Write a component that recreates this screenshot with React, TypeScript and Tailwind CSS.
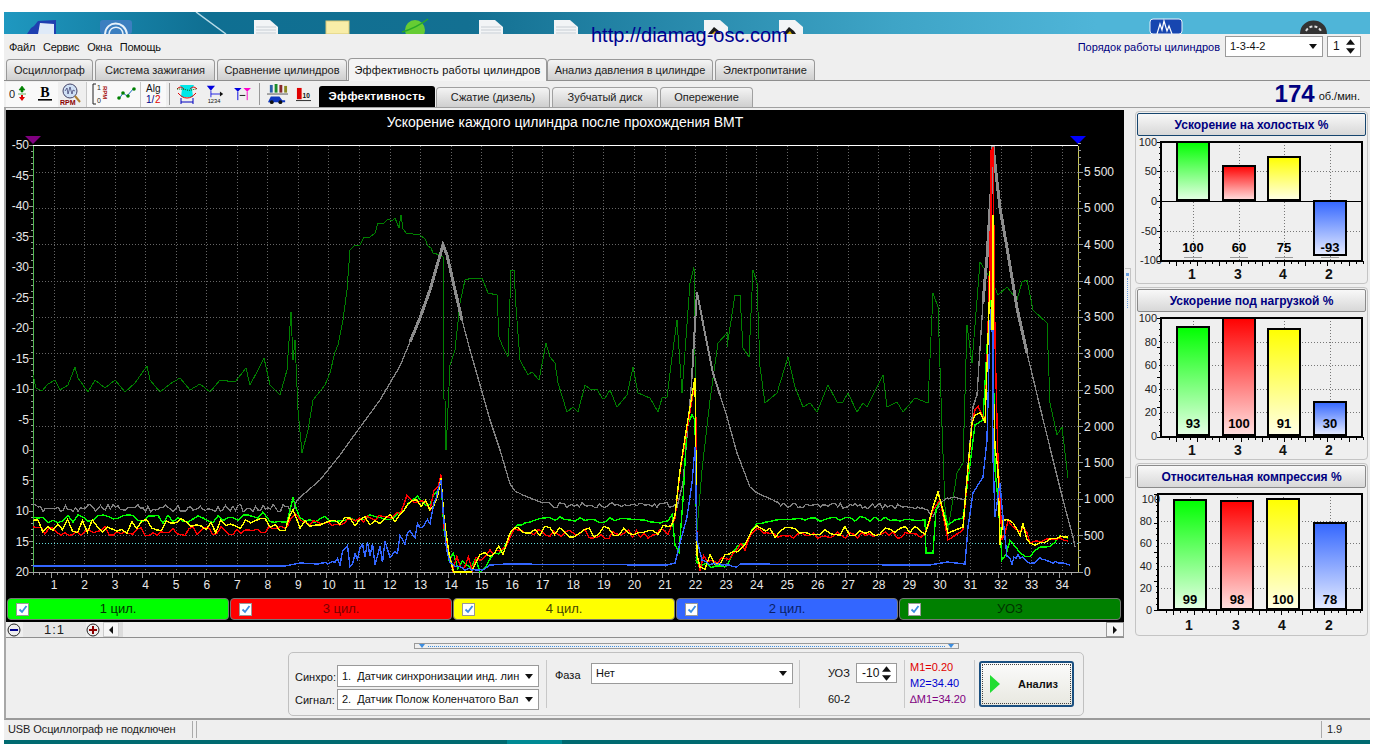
import type { ReactNode } from 'react'

const tabs = [
  { label: 'Осциллограф', w: 'w-[87px]' },
  { label: 'Система зажигания', w: 'w-[120px]' },
  { label: 'Сравнение цилиндров', w: 'w-[130px]' },
  { label: 'Эффективность работы цилиндров', w: 'w-[199px]', active: true },
  { label: 'Анализ давления в цилиндре', w: 'w-[166px]' },
  { label: 'Электропитание', w: 'w-[100px]' },
]

const cylinders = [
  { label: '1 цил.', bg: 'bg-[#00ff00]', text: 'text-[#003300]' },
  { label: '3 цил.', bg: 'bg-[#ff0000]', text: 'text-[#7a0000]' },
  { label: '4 цил.', bg: 'bg-[#ffff00]', text: 'text-[#444400]' },
  { label: '2 цил.', bg: 'bg-[#3366ff]', text: 'text-[#0a1f66]' },
  { label: 'УОЗ', bg: 'bg-[#008000]', text: 'text-[#003300]' },
]

// page coordinates: [x, y, noise]
const darkGreen = [
  [33, 375], [36, 388], [42, 391], [48, 384], [55, 380], [60, 390], [68, 385], [75, 367], [78, 378], [88, 392], [95, 380], [105, 388], [115, 380], [125, 392], [135, 383], [147, 366], [150, 380], [160, 392], [170, 384], [180, 378], [190, 390], [200, 384], [210, 392], [220, 380], [235, 382], [246, 368], [250, 385], [258, 370], [264, 358], [270, 385], [280, 395], [287, 370], [291, 312], [293, 360], [295, 340], [298, 410], [302, 453], [308, 430], [313, 400], [325, 385], [330, 373], [335, 352], [338, 345], [343, 320], [347, 290], [350, 250], [355, 245], [360, 245], [364, 237], [370, 237], [375, 233], [378, 223], [384, 223], [388, 219], [392, 221], [395, 218], [399, 228], [401, 215], [403, 229], [406, 233], [413, 234], [420, 235], [425, 239], [428, 246], [431, 248], [433, 253], [440, 255], [443, 257], [443, 398], [445, 400], [446, 450], [447, 430], [450, 365], [455, 350], [460, 303], [465, 280], [472, 278], [482, 278], [488, 293], [497, 295], [499, 337], [502, 345], [508, 357], [511, 270], [514, 270], [516, 307], [520, 360], [528, 375], [532, 372], [539, 380], [546, 343], [550, 357], [555, 363], [558, 383], [567, 412], [573, 407], [578, 412], [585, 385], [590, 389], [597, 389], [602, 398], [605, 398], [610, 390], [617, 407], [627, 395], [633, 367], [638, 393], [650, 398], [658, 412], [662, 398], [667, 397], [672, 357], [677, 320], [682, 393], [690, 283], [694, 267], [697, 530], [702, 470], [710, 400], [718, 343], [727, 333], [727, 347], [735, 295], [740, 295], [743, 348], [749, 357], [753, 270], [757, 283], [760, 367], [765, 403], [777, 393], [788, 357], [795, 387], [803, 407], [810, 403], [817, 412], [828, 385], [837, 402], [843, 402], [848, 393], [857, 412], [863, 403], [867, 407], [883, 375], [887, 407], [897, 402], [903, 412], [915, 398], [928, 403], [933, 293], [938, 307], [942, 427], [945, 507], [948, 530], [957, 473], [963, 463], [967, 325], [972, 363], [980, 262], [987, 273], [993, 283], [998, 295], [1007, 287], [1017, 300], [1022, 282], [1027, 280], [1033, 310], [1047, 323], [1050, 403], [1057, 435], [1062, 427], [1068, 478],
]

const grayPts = [
  [33, 508, 3], [293, 508, 3], [297, 500], [320, 480], [340, 455], [350, 441], [380, 400], [400, 366], [420, 318], [430, 290], [443, 245], [447, 255], [455, 290], [462, 320], [470, 350], [480, 385], [490, 420], [500, 450], [510, 484], [515, 491], [525, 496], [540, 502], [552, 505, 2], [672, 505, 2], [677, 507], [683, 483], [692, 377], [694, 340], [697, 292], [703, 323], [713, 373], [727, 417], [737, 453], [750, 487], [757, 493], [773, 500], [783, 505, 2], [925, 507, 2], [933, 517], [940, 503], [950, 497, 1], [965, 500], [973, 407], [977, 395], [983, 302], [987, 257], [992, 178], [993, 146], [1000, 208], [1007, 248], [1017, 308], [1027, 353], [1040, 407], [1053, 460], [1063, 500], [1073, 537], [1075, 547],
]

const grayThick = [
  [410, 342], [420, 318], [430, 290], [443, 245], [447, 255], [455, 290], [462, 320],
]
const grayThick2 = [
  [692, 377], [694, 340], [697, 292], [703, 323], [713, 373], [720, 395],
]
const grayThick3 = [
  [983, 302], [987, 257], [992, 178], [993, 146], [1000, 208], [1007, 248], [1017, 308], [1027, 353],
]

const greenPts = [
  [33, 519, 3], [258, 519, 3], [263, 512], [270, 522, 1], [287, 522, 1], [293, 498], [300, 520, 2], [395, 517, 2], [400, 512, 2], [413, 500, 3], [430, 503, 4], [438, 490, 5], [441, 477, 2], [444, 530, 4], [449, 560, 6], [480, 566, 5], [490, 558, 3], [503, 552, 2], [510, 535, 1], [514, 527, 1], [525, 523, 1], [545, 518, 1], [570, 520, 2], [590, 520, 2], [600, 522, 2], [620, 518, 1], [640, 519, 1], [660, 522, 1], [668, 521], [672, 515], [675, 545], [679, 552], [683, 500], [687, 425], [692, 415], [695, 420], [697, 560, 6], [725, 562, 5], [733, 550, 3], [745, 545, 2], [752, 530, 1], [757, 523, 1], [770, 522, 1], [790, 518, 1], [810, 520, 2], [840, 518, 2], [880, 520, 2], [910, 520, 1], [925, 520], [926, 553], [933, 553], [936, 510], [940, 500], [948, 525], [955, 520], [963, 518], [968, 480], [975, 425], [983, 420], [988, 330], [990, 285], [993, 340], [995, 470], [998, 500], [1002, 560], [1010, 545, 4], [1020, 555, 3], [1030, 555, 1], [1040, 548, 1], [1050, 545, 1], [1060, 537, 1], [1068, 538],
]

const redPts = [
  [33, 531, 3], [285, 531, 3], [290, 520], [296, 514], [303, 522, 1], [320, 524, 2], [395, 516, 2], [400, 514, 2], [407, 497, 2], [430, 503, 5], [438, 488, 6], [441, 476, 2], [444, 525, 4], [449, 565, 7], [480, 564, 6], [490, 555, 4], [503, 550, 3], [510, 537, 1], [514, 530, 1], [530, 534, 3], [668, 534, 3], [675, 518], [680, 472], [687, 430], [692, 400], [695, 380], [696, 425], [697, 555], [700, 565, 6], [725, 560, 5], [733, 550, 3], [745, 547, 3], [752, 533, 1], [757, 530, 1], [770, 535, 2], [925, 535, 2], [933, 510], [940, 500], [948, 540], [963, 530], [968, 470], [972, 425], [975, 408, 5], [985, 415, 5], [988, 330], [992, 150], [993, 147], [995, 340], [998, 460], [1002, 540], [1008, 520, 4], [1020, 530, 5], [1030, 540, 2], [1040, 541, 1], [1050, 539, 1], [1060, 539, 1], [1068, 541],
]

const yellowPts = [
  [33, 526, 4], [285, 526, 4], [290, 515], [293, 510], [300, 525, 2], [395, 518, 3], [400, 516, 2], [412, 505, 3], [430, 508, 4], [438, 495, 5], [441, 475, 2], [444, 520, 3], [449, 565, 7], [480, 565, 6], [490, 555, 4], [503, 550, 3], [510, 535, 1], [514, 528, 1], [530, 532, 3], [668, 531, 3], [675, 515], [680, 470], [687, 425], [692, 395], [695, 378], [697, 555], [700, 560, 6], [725, 560, 5], [733, 550, 3], [745, 545, 3], [752, 530, 1], [757, 525, 1], [770, 532, 3], [925, 531, 3], [933, 507], [938, 492], [942, 507], [948, 533], [963, 527], [968, 467], [972, 423], [975, 410, 4], [985, 420, 4], [988, 340], [992, 215], [993, 373], [995, 447], [998, 470], [1000, 545], [1003, 523, 3], [1010, 517, 4], [1017, 533, 4], [1023, 530, 4], [1030, 543, 2], [1040, 542, 1], [1050, 540, 1], [1057, 537, 1], [1068, 537],
]

const bluePts = [
  [33, 566], [285, 566], [300, 563], [318, 564], [330, 563, 2], [340, 556, 8], [395, 553, 12], [405, 540, 6], [420, 527, 5], [430, 520, 4], [436, 500, 3], [438, 490], [441, 480], [443, 510], [446, 545], [450, 565, 2], [460, 569, 2], [483, 570], [490, 565], [507, 564], [667, 565], [675, 563], [680, 543], [687, 517], [692, 483], [695, 447], [697, 540], [702, 560, 3], [737, 567], [740, 564], [930, 565], [947, 562], [965, 564], [968, 527], [973, 493], [983, 477], [987, 440], [990, 323], [992, 300], [993, 457], [995, 517], [1000, 483], [1002, 507], [1007, 557, 3], [1012, 560, 3], [1020, 557, 2], [1030, 565, 1], [1040, 559, 1], [1053, 562, 1], [1063, 563], [1070, 565],
]

function plain(pts: number[][]) {
  return pts.map((p) => `${p[0]},${p[1]}`).join(' ')
}

function noisy(pts: number[][], seed: number, step = 3, gain = 1) {
  const rnd = (i: number) => {
    const s = Math.sin(i * 12.9898 + seed * 78.233) * 43758.5453
    return s - Math.floor(s) - 0.5
  }
  const out: string[] = []
  let k = 0
  for (let i = 0; i < pts.length - 1; i++) {
    const [x1, y1, a1 = 0] = pts[i]
    const [x2, y2, a2 = 0] = pts[i + 1]
    const n = Math.max(1, Math.ceil((x2 - x1) / step))
    for (let j = 0; j < n; j++) {
      const t = j / n
      const y = y1 + (y2 - y1) * t + rnd(k++) * 2 * gain * (a1 + (a2 - a1) * t)
      out.push(`${(x1 + (x2 - x1) * t).toFixed(1)},${Math.min(572, y).toFixed(1)}`)
    }
  }
  const last = pts[pts.length - 1]
  out.push(`${last[0]},${last[1]}`)
  return out.join(' ')
}

const xAt = (t: number) => 54 + 30.55 * (t - 1)
const hours = Array.from({ length: 34 }, (_, i) => i + 1)
const leftLabels = [-50, -45, -40, -35, -30, -25, -20, -15, -10, -5, 0, 5, 10, 15, 20]
const rightLabels = ['500', '1 000', '1 500', '2 000', '2 500', '3 000', '3 500', '4 000', '4 500', '5 000', '5 500']

function MainChart() {
  return (
    <svg viewBox="6 110 1118 488" className="block w-[1118px] h-[488px]">
      <text x="565" y="127" fill="#fff" fontSize="14" textAnchor="middle">Ускорение каждого цилиндра после прохождения ВМТ</text>
      <polygon points="25,136 41,136 33,144" fill="#800080" />
      <polygon points="1070,136 1086,136 1078,144" fill="#0000ff" />
      <g shapeRendering="crispEdges">
        {hours.map((h) => (
          <line key={h} x1={xAt(h)} x2={xAt(h)} y1="146" y2="572" stroke="#666" strokeDasharray="1 2" />
        ))}
        {rightLabels.map((l, i) => (
          <line key={l} x1="33" x2="1078" y1={572 - 36.36 * (i + 1)} y2={572 - 36.36 * (i + 1)} stroke="#666" strokeDasharray="1 2" />
        ))}
        <line x1="33" x2="1078" y1="543" y2="543" stroke="#66dddd" strokeDasharray="1 2" />
        <line x1="33" x2="1078" y1="145.5" y2="145.5" stroke="#fff" strokeWidth="1.5" />
        <line x1="33" x2="1078" y1="572.5" y2="572.5" stroke="#a8a8a8" strokeWidth="1.5" />
        <line x1="33.5" x2="33.5" y1="146" y2="572" stroke="#55bb55" strokeWidth="1.5" />
        <line x1="1078.5" x2="1078.5" y1="146" y2="572" stroke="#c8c85a" strokeWidth="1.5" />
        {Array.from({ length: 71 }, (_, i) => (
          <line key={i} x1={i % 5 === 0 ? 29 : 31} x2="33" y1={145 + i * 6.1} y2={145 + i * 6.1} stroke="#999" />
        ))}
        {Array.from({ length: 171 }, (_, i) => (
          <line key={i} x1={33 + i * 6.11} x2={33 + i * 6.11} y1="573" y2={(i + 1) % 5 === 4 ? 578 : 575} stroke="#999" />
        ))}
        {Array.from({ length: 60 }, (_, i) => (
          <line key={i} x1="1078" x2={i % 5 === 0 ? 1083 : 1081} y1={572 - i * 7.27} y2={572 - i * 7.27} stroke="#999" />
        ))}
        <polyline points={plain(darkGreen)} fill="none" stroke="#008000" />
        <polyline points={noisy(grayPts, 2, 2.5, 1.3)} fill="none" stroke="#808080" strokeWidth="1.3" />
        <polyline points={plain(grayThick)} fill="none" stroke="#8c8c8c" strokeWidth="3" />
        <polyline points={plain(grayThick2)} fill="none" stroke="#8c8c8c" strokeWidth="2" />
        <polyline points={plain(grayThick3)} fill="none" stroke="#8c8c8c" strokeWidth="3" />
        <polyline points={noisy(greenPts, 3, 5, 1.5)} fill="none" stroke="#00ff00" strokeWidth="1.4" />
        <polyline points={noisy(redPts, 5, 4, 1.6)} fill="none" stroke="#ff0000" strokeWidth="1.4" />
        <polyline points={noisy(yellowPts, 7, 5, 1.9)} fill="none" stroke="#ffff00" strokeWidth="1.4" />
        <polyline points={noisy(bluePts, 9, 2.5, 1.3)} fill="none" stroke="#3366ff" strokeWidth="1.4" />
        <line x1="992.5" x2="992.5" y1="215" y2="330" stroke="#ffff00" strokeWidth="3" />
        <line x1="990.5" x2="990.5" y1="150" y2="300" stroke="#ff0000" strokeWidth="2" />
        <line x1="993" x2="993" y1="330" y2="420" stroke="#3366ff" strokeWidth="2" />
      </g>
      <g fill="#e8e8e8" fontSize="12">
        {leftLabels.map((v, i) => (
          <text key={v} x="29" y={149 + i * 30.5} textAnchor="end">{v}</text>
        ))}
        {rightLabels.map((l, i) => (
          <text key={l} x="1084" y={576 - 36.36 * (i + 1)}>{l}</text>
        ))}
        <text x="1084" y="576">0</text>
        {hours.map((h) => (
          <text key={h} x={xAt(h)} y="589" textAnchor="middle">{h}</text>
        ))}
      </g>
    </svg>
  )
}

type Bar = { x: number; top: number; bottom: number; grad: string; value: string; label: string }

const grads = [
  { id: 'g1', from: '#00ff00', to: '#e6ffe6' },
  { id: 'g3', from: '#ff0000', to: '#ffe0e0' },
  { id: 'g4', from: '#ffff00', to: '#ffffe6' },
  { id: 'g2', from: '#3366ff', to: '#e6ecff' },
]

function Gradients() {
  return (
    <svg className="w-0 h-0 block">
      <defs>
        {grads.map((g) => (
          <linearGradient key={g.id} id={g.id} x1="0" y1="0" x2="0" y2="1">
            <stop offset="0" stopColor={g.from} />
            <stop offset="1" stopColor={g.to} />
          </linearGradient>
        ))}
      </defs>
    </svg>
  )
}

function BarChart(props: {
  y: number
  left: number
  top: number
  bottom: number
  labelEnd: number
  ticks: { label: string; y: number; x?: number }[]
  grid: number[]
  gridX: number[]
  bars: Bar[]
  zero?: number
  valueY: number
  labelY: number
  underlined?: boolean
}) {
  const { y, left, top, bottom, labelEnd, ticks, grid, gridX, bars, zero, valueY, labelY, underlined } = props
  const right = 1362
  return (
    <svg viewBox={`1136 ${y} 231 147`} className="block w-[231px] h-[147px]">
      <g fontSize="11" fill="#222">
        {ticks.map((t) => (
          <text key={t.label} x={t.x ?? labelEnd} y={t.y + 4} textAnchor="end">{t.label}</text>
        ))}
      </g>
      <g shapeRendering="crispEdges">
        {grid.map((g) => (
          <line key={g} x1={left} x2={right} y1={g} y2={g} stroke="#777" strokeDasharray="1 2" />
        ))}
        {gridX.map((g) => (
          <line key={g} x1={g} x2={g} y1={top} y2={bottom} stroke="#777" strokeDasharray="1 2" />
        ))}
        {bars.map((b) => (
          <rect key={b.x} x={b.x} y={b.top} width="32" height={b.bottom - b.top} fill={`url(#${b.grad})`} stroke="#000" strokeWidth="1.2" />
        ))}
        {zero !== undefined && <line x1={left} x2={right} y1={zero} y2={zero} stroke="#000" />}
        <rect x={left} y={top} width={right - left} height={bottom - top} fill="none" stroke="#000" strokeWidth="2" />
        {Array.from({ length: 21 }, (_, i) => (
          <line key={i} x1={left - (i % 5 === 0 ? 4 : 2)} x2={left} y1={top + ((bottom - top) * i) / 20} y2={top + ((bottom - top) * i) / 20} stroke="#000" />
        ))}
        {Array.from({ length: 28 }, (_, i) => (
          <line key={i} x1={left + 8 + i * 7.2} x2={left + 8 + i * 7.2} y1={bottom} y2={bottom + (i % 3 === 1 ? 5 : 3)} stroke="#000" />
        ))}
        {underlined && bars.map((b) => (
          <rect key={b.x} x={b.x + 7} y={valueY + 5} width="18" height="1" fill="#999" />
        ))}
      </g>
      <g fontSize="13" fontWeight="700" fill="#000" textAnchor="middle">
        {bars.map((b) => (
          <text key={b.x} x={b.x + 16} y={valueY}>{b.value}</text>
        ))}
      </g>
      <g fontSize="14" fontWeight="700" fill="#111" textAnchor="middle">
        {bars.map((b) => (
          <text key={b.x} x={b.x + 15} y={labelY}>{b.label}</text>
        ))}
      </g>
    </svg>
  )
}

function Group({ title, focused, children }: { title: string; focused?: boolean; children: ReactNode }) {
  return (
    <div className="h-[173px] w-[233px] rounded-[4px] border border-[#c4c4c4] overflow-hidden">
      <div className={`mx-px mt-px h-[23px] w-[229px] rounded-[2px] border bg-gradient-to-b from-[#f8f8f8] to-[#d8d8d8] flex items-center justify-center text-[12px] font-bold text-[#000080] ${focused ? 'border-[#16456e]' : 'border-[#8a8a8a]'}`}>
        {title}
      </div>
      {children}
    </div>
  )
}

function Caret() {
  return (
    <svg viewBox="0 0 8 5" className="w-[8px] h-[5px] shrink-0">
      <polygon points="0,0 8,0 4,5" fill="#111" />
    </svg>
  )
}

function Select({ value, w, h }: { value: string; w: string; h: string }) {
  return (
    <div className={`${w} ${h} text-[11px] bg-white border border-[#9a9a9a] flex items-center pl-[4px] pr-[5px] text-[#111]`}>
      <span className="flex-1 whitespace-pre">{value}</span>
      <Caret />
    </div>
  )
}

function Spin({ value, w, h }: { value: string; w: string; h: string }) {
  return (
    <div className={`${w} ${h} bg-white border border-[#9a9a9a] flex items-center justify-between pl-[5px] pr-[5px] text-[12px] text-[#111]`}>
      <span>{value}</span>
      <svg viewBox="0 0 10 16" className="w-[9px] h-[15px]">
        <polygon points="0,6 10,6 5,0" fill="#111" />
        <polygon points="0,10 10,10 5,16" fill="#111" />
      </svg>
    </div>
  )
}

function Tool({ children, w, light }: { children: ReactNode; w: string; light?: boolean }) {
  return <div className={`${w} h-[25px] flex items-center justify-center ${light ? 'bg-[#f9f9f9]' : ''}`}>{children}</div>
}

function SubTab({ w, label }: { w: string; label: string }) {
  return (
    <div className={`${w} mr-[2px] h-[20px] self-end rounded-t-[4px] border border-b-0 border-[#a0a0a0] bg-gradient-to-b from-[#f4f4f4] to-[#cfcfcf] text-[11px] text-[#222] flex items-center justify-center`}>{label}</div>
  )
}

function Toolbar() {
  return (
    <div className="flex items-center pl-[2px] h-[26px] shrink-0">
      <Tool w="w-[25px]" light>
        <svg viewBox="0 0 20 18" className="w-[20px] h-[18px]">
          <text x="0" y="13" fontSize="11" fill="#222">0</text>
          <path d="M13 1l3 4h-2v2h-2V5h-2zM9 9h8" fill="#008000" stroke="#008000" strokeWidth=".6" />
          <path d="M13 16l3-4h-2v-2h-2v2h-2z" fill="#e00000" />
        </svg>
      </Tool>
      <Tool w="w-[27px]" light>
        <svg viewBox="0 0 18 18" className="w-[18px] h-[18px]">
          <text x="9" y="12" fontSize="14" fontWeight="700" textAnchor="middle" fill="#000" fontFamily="Liberation Serif">B</text>
          <rect x="2" y="14" width="14" height="1.6" fill="#000" />
        </svg>
      </Tool>
      <Tool w="w-[28px]">
        <svg viewBox="0 0 24 24" className="w-[24px] h-[24px]">
          <circle cx="10" cy="9" r="7" fill="#cfe0f5" stroke="#446" />
          <path d="M5 9l2-3 1 6 2-7 2 7 1-4 2 1" fill="none" stroke="#336" strokeWidth=".7" />
          <path d="M15 14l5 6" stroke="#b08030" strokeWidth="2" />
          <text x="0" y="23" fontSize="7" fontWeight="700" fill="#8b0000">RPM</text>
        </svg>
      </Tool>
      <div className="w-px h-[25px] bg-[#c8c8c8]" />
      <Tool w="w-[27px]" light>
        <svg viewBox="0 0 18 24" className="w-[18px] h-[24px]">
          <path d="M4 2H1v20h3" fill="none" stroke="#222" />
          <text x="5" y="8" fontSize="7" fill="#222">1</text>
          <text x="5" y="21" fontSize="7" fill="#222">0</text>
          <text x="0" y="0" fontSize="6" fontWeight="700" fill="#a00000" transform="translate(11 4) rotate(90)">RPM</text>
        </svg>
      </Tool>
      <Tool w="w-[26px]" light>
        <svg viewBox="0 0 20 14" className="w-[20px] h-[14px]">
          <path d="M2 12l4-6 4 3 7-8" fill="none" stroke="#1a6abf" />
          <circle cx="2" cy="11" r="1.8" fill="#008000" /><circle cx="6" cy="6" r="1.8" fill="#008000" />
          <circle cx="11" cy="9" r="1.8" fill="#008000" /><circle cx="17" cy="2" r="1.8" fill="#008000" />
        </svg>
      </Tool>
      <div className="w-px h-[25px] bg-[#c8c8c8]" />
      <Tool w="w-[25px]" light>
        <svg viewBox="0 0 18 24" className="w-[18px] h-[24px]">
          <text x="1" y="10" fontSize="10" fill="#111">Alg</text>
          <text x="1" y="21" fontSize="10" fill="#00008b">1/</text>
          <text x="10" y="21" fontSize="10" fill="#e00000">2</text>
        </svg>
      </Tool>
      <div className="w-[3px]" />
      <div className="w-px h-[22px] bg-[#999]" />
      <Tool w="w-[34px]">
        <svg viewBox="0 0 22 22" className="w-[22px] h-[22px]">
          <path d="M4 2h14l-2 4 1 8H5l1-8z" fill="#00e8e8" />
          <path d="M1 6c3-3 5-2 7 0M21 6c-3-3-5-2-7 0M2 10c3 3 5 5 9 5s6-2 9-5" fill="none" stroke="#e00000" />
          <path d="M1 6c4 0 6 0 10 1s6-1 10-1" fill="none" stroke="#006400" strokeDasharray="1 1" />
          <path d="M5 15v6M17 15v6M5 19h12" stroke="#0000c0" fill="none" />
        </svg>
      </Tool>
      <Tool w="w-[21px]">
        <svg viewBox="0 0 22 22" className="w-[18px] h-[18px]">
          <polygon points="1,1 11,1 6,7" fill="#0000e0" />
          <path d="M6 7v8M6 11h12" stroke="#0000e0" fill="none" />
          <polygon points="17,8 21,11 17,14" fill="#111" />
          <text x="2" y="22" fontSize="7" fill="#111">1234</text>
        </svg>
      </Tool>
      <Tool w="w-[34px]">
        <svg viewBox="0 0 18 16" className="w-[17px] h-[15px]">
          <polygon points="0,1 8,1 4,5" fill="#0000e0" />
          <path d="M4 5v9" stroke="#0000e0" />
          <polygon points="10,1 18,1 14,5" fill="#ff00cc" />
          <path d="M14 5v9" stroke="#ff00cc" />
          <path d="M6 9h6" stroke="#111" />
        </svg>
      </Tool>
      <div className="w-px h-[22px] bg-[#999]" />
      <Tool w="w-[34px]">
        <svg viewBox="0 0 22 22" className="w-[21px] h-[21px]">
          <rect x="3" y="1" width="3" height="8" fill="#2a5ea8" /><rect x="8" y="0" width="3" height="9" fill="#1a8a2a" />
          <rect x="13" y="1" width="3" height="8" fill="#8a2a2a" /><rect x="18" y="2" width="3" height="7" fill="#8a8a20" />
          <rect x="0" y="10" width="22" height="1" fill="#555" />
          <path d="M2 17l2-4h9l3 4h3v2H1z" fill="#1038c0" />
          <circle cx="5" cy="19" r="2" fill="#111" /><circle cx="14" cy="19" r="2" fill="#111" />
        </svg>
      </Tool>
      <Tool w="w-[18px]">
        <svg viewBox="0 0 16 16" className="w-[15px] h-[15px]">
          <rect x="1" y="1" width="5" height="12" fill="#e00000" />
          <text x="7" y="12" fontSize="7" fontWeight="700" fill="#111">10</text>
          <rect x="0" y="14" width="16" height="1" fill="#222" />
        </svg>
      </Tool>
      <div className="w-[7px]" />
      <div className="w-[116px] h-[21px] self-end bg-black rounded-t-[3px] text-white font-bold text-[11.5px] tracking-[.3px] flex items-center justify-center">Эффективность</div>
      <div className="w-px" />
      <SubTab w="w-[114px]" label="Сжатие (дизель)" />
      <SubTab w="w-[106px]" label="Зубчатый диск" />
      <SubTab w="w-[93px]" label="Опережение" />
      <div className="flex-1 flex items-center justify-end pr-[10px] h-[26px]">
        <span className="text-[24px] leading-none font-bold text-[#000080]">174</span>
        <span className="ml-[4px] mt-[5px] text-[11px] text-[#111]">об./мин.</span>
      </div>
    </div>
  )
}

function Desktop() {
  return (
    <svg viewBox="4 12 1366 22" className="block w-[1366px] h-[22px] shrink-0">
      <defs>
        <linearGradient id="wall" x1="0" y1="0" x2="1" y2="0">
          <stop offset="0" stopColor="#1f98c0" />
          <stop offset=".15" stopColor="#0f6f92" />
          <stop offset=".34" stopColor="#137092" />
          <stop offset=".65" stopColor="#3ea4c6" />
          <stop offset=".8" stopColor="#4fb5d8" />
          <stop offset="1" stopColor="#4fb5d8" />
        </linearGradient>
      </defs>
      <rect x="4" y="12" width="1366" height="22" fill="url(#wall)" />
      <path d="M196 12l30 22" stroke="#b8dce8" strokeWidth="1.5" />
      <path d="M27 34l4-6 3-2 4-5 18-1v14z" fill="#1f3fb0" />
      <path d="M40 23l14 1v10H38z" fill="#dfeaf8" />
      <rect x="100" y="20" width="32" height="14" rx="3" fill="#3c7fc0" />
      <path d="M105 34c1-14 20-14 22 0" fill="none" stroke="#e8f2fa" strokeWidth="2" />
      <path d="M109 34c1-9 13-9 14 0" fill="none" stroke="#e8f2fa" strokeWidth="1.5" />
      {[254, 479, 554].map((x) => (
        <g key={x}>
          <path d={`M${x} 20h16l8 7v7h-24z`} fill="#f2f4f6" />
          <path d={`M${x + 2} 27h20M${x + 2} 30h20M${x + 2} 33h20`} stroke="#c8ced4" />
        </g>
      ))}
      {[704, 779].map((x) => (
        <g key={x}>
          <path d={`M${x} 20h16l8 7v7h-24z`} fill="#f2f4f6" />
          <path d={`M${x + 4} 34l6-7 5 4 2 3z`} fill="#1a1a1a" />
          <path d={`M${x + 8} 34l3-3 2 3z`} fill="#d8b400" />
        </g>
      ))}
      <rect x="326" y="21" width="23" height="13" fill="#f8eda8" stroke="#d8c878" />
      <circle cx="415" cy="30" r="10" fill="#66cc33" />
      <path d="M402 32c8-2 20-8 26-13" fill="none" stroke="#28a828" strokeWidth="1.5" />
      <rect x="1150" y="19" width="32" height="15" rx="3" fill="#1746b0" stroke="#e8f0fa" />
      <path d="M1157 34l3-10 2 6 2-9 3 10 2-5 3 8" fill="none" stroke="#fff" strokeWidth="1.2" />
      <path d="M1300 34c0-18 27-18 27 0z" fill="#333" />
      <path d="M1306 31c3-6 12-6 15 0" fill="none" stroke="#ddd" strokeWidth="2" strokeDasharray="3 2" />
    </svg>
  )
}

export default function App() {
  return (
    <div className="w-[1382px] h-[744px] bg-white pt-[12px] pl-[4px] pr-[12px] overflow-hidden font-['Liberation_Sans',sans-serif] flex flex-col">
      <Gradients />
      <Desktop />
      <div className="relative w-[1366px] h-[706px] shrink-0 bg-[#efefef] flex flex-col">
        <div className="absolute left-[587px] -top-[11px] text-[20px] leading-[24px] text-[#000090] whitespace-nowrap">http://diamag-osc.com</div>

        <div className="h-[24px] shrink-0 flex items-center pl-[5px] text-[11px] tracking-[-.25px] text-[#111] pt-[3px]">
          <span className="mr-[8px]">Файл</span>
          <span className="mr-[8px]">Сервис</span>
          <span className="mr-[8px]">Окна</span>
          <span>Помощь</span>
          <div className="ml-auto flex items-center pr-[9px] -mt-[3px] tracking-normal">
            <span className="text-[#000080] text-[11px] mr-[5px] mt-[2px]">Порядок работы цилиндров</span>
            <Select value="1-3-4-2" w="w-[98px]" h="h-[21px]" />
            <div className="w-[4px]" />
            <Spin value="1" w="w-[34px]" h="h-[21px]" />
          </div>
        </div>

        <div className="h-[23px] shrink-0 flex items-end pl-[2px] border-b border-[#8e8e8e] whitespace-nowrap">
          {tabs.map((t) =>
            t.active ? (
              <div key={t.label} className={`${t.w} h-[23px] -mb-px -ml-px z-10 rounded-t-[4px] border border-b-0 border-[#999] bg-[#f4f4f4] text-[11px] tracking-[.15px] text-[#111] flex items-center justify-center`}>{t.label}</div>
            ) : (
              <div key={t.label} className={`${t.w} h-[21px] rounded-t-[4px] border border-b-0 border-[#999] mr-[2px] bg-gradient-to-b from-[#f4f4f4] to-[#cfcfcf] text-[11px] text-[#222] flex items-center justify-center`}>{t.label}</div>
            ),
          )}
        </div>

        <div className="h-[27px] shrink-0 border-b border-[#a0a0a0]">
          <Toolbar />
        </div>

        <div className="h-[532px] shrink-0 flex">
          <div className="w-[1121px] shrink-0 border-l-2 border-[#a8a8a8] pt-[2px]">
            <div className="w-[1118px] h-[512px] bg-black">
              <MainChart />
              <div className="flex gap-px pl-[1px]">
                {cylinders.map((c) => (
                  <div key={c.label} className={`w-[222px] h-[22px] rounded-[4px] border border-[#777] ${c.bg} ${c.text} flex items-center text-[13px] pl-[8px]`}>
                    <span className="w-[13px] h-[13px] bg-white border border-[#999] flex items-center justify-center">
                      <svg viewBox="0 0 10 10" className="w-[10px] h-[10px]">
                        <path d="M1.5 5.5l2.5 2.5 4.5-6" fill="none" stroke="#3b8de0" strokeWidth="1.8" />
                      </svg>
                    </span>
                    <span className="flex-1 text-center pr-[21px]">{c.label}</span>
                  </div>
                ))}
              </div>
            </div>
            <div className="w-[1118px] h-[16px] flex items-center border-b border-[#8e8e8e] pl-[1px] text-[#222]">
              <svg viewBox="0 0 14 14" className="w-[14px] h-[14px]">
                <circle cx="7" cy="7" r="6" fill="#eee" stroke="#222" />
                <rect x="3" y="6" width="8" height="2" fill="#00008b" />
              </svg>
              <div className="ml-[2px] w-[63px] h-[15px] bg-[#e6e6e6] text-[13px] leading-[16px] text-center tracking-[1px]">1:1</div>
              <svg viewBox="0 0 14 14" className="w-[14px] h-[14px]">
                <circle cx="7" cy="7" r="6" fill="#eee" stroke="#222" />
                <path d="M3 7h8M7 3v8" stroke="#8b0000" strokeWidth="2" />
              </svg>
              <div className="ml-[3px] w-[16px] h-[15px] bg-[#f6f6f6] border border-[#ccc] flex items-center justify-center">
                <svg viewBox="0 0 4 8" className="w-[4px] h-[8px]"><polygon points="4,0 4,8 0,4" fill="#111" /></svg>
              </div>
              <div className="w-[4px] h-[15px] bg-[#dcdcdc]" />
              <div className="flex-1" />
              <div className="w-[18px] h-[15px] bg-[#f6f6f6] border border-[#999] flex items-center justify-center">
                <svg viewBox="0 0 4 8" className="w-[4px] h-[8px]"><polygon points="0,0 0,8 4,4" fill="#111" /></svg>
              </div>
            </div>
          </div>

          <div className="w-[7px] shrink-0 pt-[160px]">
            <div className="w-[6px] h-[210px] border border-l-0 border-[#c4c4c4] flex flex-col items-center pt-[4px] gap-[2px]">
              <span className="w-[3px] h-[3px] bg-[#6aa0e0]" />
              <span className="w-[2px] h-[30px] border-l border-dotted border-[#6aa0e0]" />
            </div>
          </div>

          <div className="pl-[3px] pt-[3px] flex flex-col gap-[3px]">
            <Group title="Ускорение на холостых %" focused>
              <BarChart
                y={136}
                left={1161}
                top={142}
                bottom={261}
                zero={201}
                labelEnd={1157}
                ticks={[{ label: '100', y: 142 }, { label: '50', y: 171 }, { label: '0', y: 201 }, { label: '-50', y: 231 }, { label: '-100', y: 260, x: 1162 }]}
                grid={[171, 231]}
                gridX={[1193, 1239, 1284, 1330]}
                valueY={252}
                labelY={279}
                underlined
                bars={[
                  { x: 1177, top: 142, bottom: 200, grad: 'g1', value: '100', label: '1' },
                  { x: 1223, top: 166, bottom: 200, grad: 'g3', value: '60', label: '3' },
                  { x: 1268, top: 157, bottom: 200, grad: 'g4', value: '75', label: '4' },
                  { x: 1314, top: 201, bottom: 255, grad: 'g2', value: '-93', label: '2' },
                ]}
              />
            </Group>
            <Group title="Ускорение под нагрузкой %">
              <BarChart
                y={312}
                left={1161}
                top={318}
                bottom={437}
                labelEnd={1157}
                ticks={[{ label: '100', y: 318 }, { label: '80', y: 342 }, { label: '60', y: 365 }, { label: '40', y: 389 }, { label: '20', y: 412 }, { label: '0', y: 436 }]}
                grid={[342, 365, 389, 412]}
                gridX={[1193, 1239, 1284, 1330]}
                valueY={428}
                labelY={455}
                bars={[
                  { x: 1177, top: 327, bottom: 435, grad: 'g1', value: '93', label: '1' },
                  { x: 1223, top: 318, bottom: 435, grad: 'g3', value: '100', label: '3' },
                  { x: 1268, top: 329, bottom: 435, grad: 'g4', value: '91', label: '4' },
                  { x: 1314, top: 402, bottom: 435, grad: 'g2', value: '30', label: '2' },
                ]}
              />
            </Group>
            <Group title="Относительная компрессия %">
              <BarChart
                y={488}
                left={1158}
                top={494}
                bottom={610}
                labelEnd={1152}
                ticks={[{ label: '100', y: 499, x: 1160 }, { label: '80', y: 521 }, { label: '60', y: 543 }, { label: '40', y: 566 }, { label: '20', y: 588 }, { label: '0', y: 610 }]}
                grid={[521, 543, 566, 588]}
                gridX={[1190, 1237, 1283, 1330]}
                valueY={604}
                labelY={630}
                bars={[
                  { x: 1174, top: 500, bottom: 609, grad: 'g1', value: '99', label: '1' },
                  { x: 1221, top: 501, bottom: 609, grad: 'g3', value: '98', label: '3' },
                  { x: 1267, top: 499, bottom: 609, grad: 'g4', value: '100', label: '4' },
                  { x: 1314, top: 523, bottom: 609, grad: 'g2', value: '78', label: '2' },
                ]}
              />
            </Group>
          </div>
        </div>

        <div className="h-[80px] shrink-0 border-b-2 border-[#9a9a9a] border-l-2 border-l-[#a8a8a8] pt-[3px]">
          <div className="ml-[408px] w-[545px] h-[6px] border border-[#9a9a9a] flex items-center justify-between px-[4px]">
            <svg viewBox="0 0 6 4" className="w-[6px] h-[4px]"><polygon points="0,0 6,0 3,4" fill="#3b8de0" /></svg>
            <span className="flex-1 mx-[3px] border-t border-dotted border-[#3b8de0]" />
            <svg viewBox="0 0 6 4" className="w-[6px] h-[4px]"><polygon points="0,0 6,0 3,4" fill="#3b8de0" /></svg>
          </div>
          <div className="ml-[282px] mt-[3px] w-[796px] h-[64px] rounded-[5px] border border-[#c0c0c0] flex text-[11px] text-[#111]">
            <div className="w-[258px] h-[48px] mt-[7px] border-r border-[#c8c8c8] pl-[6px] pt-[5px] flex flex-col gap-[2px]">
              <div className="flex items-center">
                <span className="w-[42px] mt-[3px]">Синхро:</span>
                <Select value="1.  Датчик синхронизации инд. лин" w="w-[202px]" h="h-[22px]" />
              </div>
              <div className="flex items-center">
                <span className="w-[42px] mt-[2px]">Сигнал:</span>
                <Select value="2.  Датчик Полож Коленчатого Вал" w="w-[202px]" h="h-[21px]" />
              </div>
            </div>
            <div className="w-[253px] h-[48px] mt-[7px] border-r border-[#c8c8c8] pl-[8px] pt-[3px] flex items-start">
              <span className="w-[36px] mt-[4px]">Фаза</span>
              <Select value="Нет" w="w-[202px]" h="h-[21px]" />
            </div>
            <div className="w-[105px] h-[48px] mt-[7px] border-r border-[#c8c8c8] pl-[28px] pt-[3px] flex flex-col">
              <div className="flex items-center">
                <span className="w-[28px]">УОЗ</span>
                <Spin value="-10" w="w-[41px]" h="h-[20px]" />
              </div>
              <span className="mt-[8px]">60-2</span>
            </div>
            <div className="w-[70px] h-[48px] mt-[7px] border-r border-[#c8c8c8] pl-[5px] pt-[1px] flex flex-col gap-[3px] leading-[13px]">
              <span className="text-[#e00000]">M1=0.20</span>
              <span className="text-[#0000d0]">M2=34.40</span>
              <span className="text-[#800080]">∆M1=34.20</span>
            </div>
            <div className="ml-[4px] mt-[8px] w-[95px] h-[46px] rounded-[3px] border-2 border-[#1a4f80] bg-gradient-to-b from-[#fbfbfb] to-[#e8e8e0] p-px">
              <div className="w-full h-full border border-dotted border-[#444] flex items-center pl-[7px]">
                <svg viewBox="0 0 10 18" className="w-[10px] h-[18px]"><polygon points="0,0 10,9 0,18" fill="#22dd33" /></svg>
                <span className="ml-[18px] font-bold text-[#111]">Анализ</span>
              </div>
            </div>
          </div>
        </div>

        <div className="h-[18px] flex text-[11px] tracking-[-.1px] text-[#222] pt-px whitespace-nowrap">
          <div className="w-[189px] pl-[4px] leading-[16px] border-r border-[#aaa]">USB Осциллограф не подключен</div>
          <div className="w-[3px]" />
          <div className="w-[1126px] border-l border-r border-[#aaa]" />
          <div className="pl-[5px] leading-[16px]">1.9</div>
        </div>
      </div>
      <div className="h-[4px] w-[1366px] shrink-0 bg-[#006a70] flex">
        <div className="ml-[503px] w-[55px] bg-[#008a94]" />
      </div>
    </div>
  )
}
